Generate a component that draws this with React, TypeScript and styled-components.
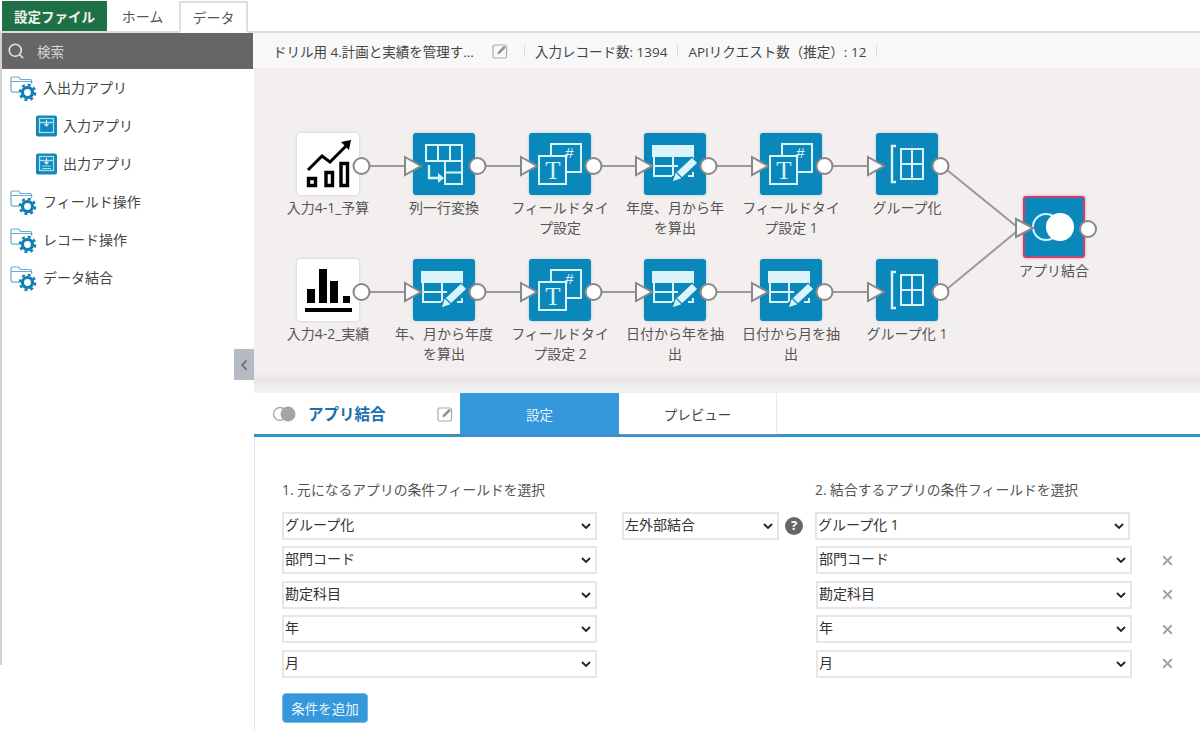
import React from "react";
import styled, { createGlobalStyle } from "styled-components";
import { ChevronLeft, Search, X } from "lucide-react";

const Global = createGlobalStyle`
  html, body { margin: 0; padding: 0; background: #fff; }
  * { box-sizing: border-box; }
  body { font-family: "Open Sans", "Noto Sans CJK JP", sans-serif; color: #444; }
`;

const Page = styled.div`
  width: 1200px; height: 731px; overflow: hidden; display: flex; flex-direction: column; background: #fff;
`;
const TabBar = styled.div`
  height: 33px; display: flex; padding-left: 2px; padding-top: 1px; border-bottom: 2px solid #dcdcdc; flex: none;
`;
const FileTab = styled.div`
  width: 105px; height: 30px; background: #1e7145; color: #f2f2f2; font-weight: 700; font-size: 13.5px;
  display: flex; align-items: center; justify-content: center;
`;
const TopTab = styled.div<{ $active?: boolean }>`
  height: ${p => (p.$active ? "32px" : "30px")};
  width: ${p => (p.$active ? "69px" : "71px")};
  margin-left: ${p => (p.$active ? "1px" : "0")};
  display: flex; align-items: center; justify-content: center; font-size: 14px; color: #555; background: #fff;
  border: ${p => (p.$active ? "2px solid #dedede" : "none")};
  border-bottom: ${p => (p.$active ? "2px solid #fff" : "none")};
`;
const Body = styled.div`
  flex: 1; display: flex; min-height: 0;
`;
const Sidebar = styled.aside`
  position: relative; width: 254px; height: 632px; border-left: 2px solid #d2d2d2; flex: none;
`;
const SearchBar = styled.div`
  height: 36px; width: 251px; background: #666; color: #d4d4d4; display: flex; align-items: center;
  font-size: 13.5px; gap: 12px; padding-left: 5px;
`;
const Tree = styled.div`
  display: flex; flex-direction: column;
`;
const TreeRow = styled.div<{ $child?: boolean }>`
  height: 38px; display: flex; align-items: center; font-size: 14px; color: #444;
  padding-left: ${p => (p.$child ? "34px" : "8px")};
  gap: ${p => (p.$child ? "5px" : "6px")};
`;
const TreeText = styled.span`
  margin-top: -2px;
`;
const Collapse = styled.div`
  position: absolute; right: 0; top: 316px; width: 20px; height: 31px; background: #b4bbc2; color: #6f7780;
  display: flex; align-items: center; justify-content: center;
`;
const Main = styled.main`
  flex: 1; min-width: 0; display: flex; flex-direction: column;
`;
const InfoBar = styled.div`
  height: 36px; flex: none; background: #f8f8f8; display: flex; align-items: center; padding-left: 19px;
  font-size: 13.5px; color: #444; border-bottom: 1px solid #eaeaea; white-space: nowrap;
`;
const FlowTitle = styled.span`
  width: 219px;
`;
const Sep = styled.span<{ $wide?: boolean }>`
  width: 1px; height: 12px; background: #d8d8d8;
  margin: 0 10px 0 ${p => (p.$wide ? "15px" : "10px")};
`;
const Canvas = styled.section`
  position: relative; height: 311px; flex: none; background: #f4efef;
  box-shadow: inset 0 -7px 6px -5px rgba(90, 70, 70, .1);
`;
const Wires = styled.svg`
  position: absolute; inset: 0; width: 100%; height: 100%; z-index: 2;
`;
const FlowNode = styled.div<{ $x: number; $y: number }>`
  position: absolute; left: ${p => p.$x - 19}px; top: ${p => p.$y}px; width: 100px;
  display: flex; flex-direction: column; align-items: center;
`;
const NodeBox = styled.div<{ $white?: boolean; $selected?: boolean }>`
  width: 62px; height: 62px; border-radius: 3px; margin-bottom: 3px;
  background: ${p => (p.$white ? "#fff" : "#0b88bb")};
  border: ${p => (p.$selected ? "2px solid #c8436c" : "none")};
  box-shadow: 0 0 3px ${p => (p.$selected ? "rgba(210,68,111,.6)" : "rgba(60,130,170,.35)")};
  display: flex; align-items: center; justify-content: center;
`;
const NodeLabel = styled.div`
  width: 100px; font-size: 14px; line-height: 20px; text-align: center; color: #555;
`;
const Strip = styled.div`
  height: 13px; flex: none; background: linear-gradient(#e8e4e4, #eeeeee 50%, #f1f1f1);
`;
const PanelHead = styled.div`
  height: 44px; flex: none; display: flex; border-bottom: 3px solid #3a8fc8; padding-left: 18px; background: #fff;
`;
const PanelTitle = styled.div`
  width: 188px; display: flex; align-items: center; gap: 10px; font-size: 15.5px; font-weight: 700; color: #1a6fae;
`;
const TitleText = styled.span`
  width: 119px;
`;
const PanelTab = styled.div<{ $active?: boolean }>`
  height: 41px; display: flex; align-items: center; justify-content: center; font-size: 13.5px;
  width: ${p => (p.$active ? "159px" : "157px")};
  background: ${p => (p.$active ? "#3498db" : "#fff")};
  color: ${p => (p.$active ? "#e6f3fb" : "#444")};
  box-shadow: ${p => (p.$active ? "none" : "1px 0 1px #e8e8e8")};
`;
const Form = styled.section`
  flex: 1; border-left: 1px solid #e6e6e6; padding: 40px 0 0 27px; position: relative;
`;
const Grid = styled.div`
  display: grid; grid-template-columns: 340px 193px 351px 20px; align-items: start;
`;
const Column = styled.div`
  display: flex; flex-direction: column;
`;
const ColLabel = styled.div`
  height: 34.5px; font-size: 13.8px; color: #555; line-height: 26px; white-space: nowrap;
`;
const chevron = encodeURIComponent(
  '<svg xmlns="http://www.w3.org/2000/svg" width="10" height="6" viewBox="0 0 10 6"><path d="M1 1l4 4 4-4" fill="none" stroke="#222" stroke-width="1.800"/></svg>'
);
const Field = styled.select<{ $w?: number; $shift?: number }>`
  appearance: none;
  width: ${p => p.$w ?? 315}px; height: 28px; margin: 0 0 6.5px ${p => p.$shift ?? 0}px;
  border: 2px solid #e6e6e6; border-radius: 0; color: #333;
  background: #fff url("data:image/svg+xml,${chevron}") no-repeat right 4px center;
  font-family: "Open Sans", "Noto Sans CJK JP", sans-serif; font-size: 14px; padding: 0 16px 3px 1px; outline: none;
`;
const MiddleRow = styled.div`
  display: flex; align-items: flex-start; margin-top: 34.5px; gap: 6px;
`;
const Help = styled.div`
  width: 18px; height: 18px; margin-top: 5px; border-radius: 50%; background: #666; color: #fff; font-weight: 700; font-size: 13px;
  display: flex; align-items: center; justify-content: center; line-height: 1;
`;
const RemoveList = styled.div`
  display: flex; flex-direction: column; padding-top: 69px; margin-left: -9px;
`;
const Remove = styled.div`
  height: 28px; margin-bottom: 6.5px; color: #a3a3a3; display: flex; align-items: center; justify-content: center; width: 20px;
`;
const AddButton = styled.button`
  display: block; width: 86px; height: 30px; margin-top: 8.5px; background: #3498db; border: 1px solid #76b9e6; border-radius: 4px; color: #eaf5fc;
  font-family: "Open Sans", "Noto Sans CJK JP", sans-serif; font-size: 13.5px; padding: 0;
`;

const Edit = () => (
  <svg width="17" height="16" viewBox="0 0 17 16" fill="none">
    <rect x="1" y="2" width="13.500" height="13" rx="1.500" stroke="#aaa" strokeWidth="1.200" />
    <path d="M5 11.500l.6-2.600L12 2.400l2.200 2.200-6.400 6.400z" fill="#8f8f8f" stroke="#fff" strokeWidth=".6" />
  </svg>
);

const FolderGear = () => (
  <svg width="27" height="27" viewBox="0 0 27 27" fill="none">
    <path d="M1 15V3.500C1 2.500 1.600 2 2.500 2h6l2 2.500H20c1 0 1.600.6 1.600 1.500v3M1 6.500h20M1 15c0 1.500.8 2.200 2 2.200h6" stroke="#66add0" strokeWidth="1.200" />
    <circle cx="17.500" cy="17.500" r="5" stroke="#0e7fb2" strokeWidth="3.200" />
    <circle cx="17.500" cy="17.500" r="7.600" stroke="#0e7fb2" strokeWidth="2.400" strokeDasharray="3 2.970" />
  </svg>
);

const AppIcon = ({ output }: { output?: boolean }) => (
  <svg width="22" height="22" viewBox="0 0 22 22" fill="none">
    <rect width="21" height="21" y="0.500" rx="2" fill="#1486b8" />
    <rect x="3.500" y="3.500" width="14" height="14" fill="#1486b8" stroke="#9fe0f2" strokeWidth="1.300" />
    <path d="M3.500 7.500h14" stroke="#9fe0f2" strokeWidth="1.500" />
    <path d="M10.500 5v5M8.500 9l2 2 2-2" stroke="#d8f4fb" strokeWidth="1.100" />
    {output && <path d="M6 13h9M6 15.500h9" stroke="#9fe0f2" strokeWidth="1" />}
  </svg>
);

const stroke = "#d9f4fb";

const RiseIcon = () => (
  <svg width="62" height="62" viewBox="0 0 62 62" fill="none">
    <path d="M11 37l14-14 8 6 16-16" stroke="#000" strokeWidth="3" />
    <path d="M44 9l10-2-2 10z" fill="#000" />
    <path d="M11.500 45.500h7v7h-7zM29 39.500h6.500v13H29zM44 30.500h6.500v22H44z" stroke="#000" strokeWidth="3.400" />
  </svg>
);
const BarsIcon = () => (
  <svg width="62" height="62" viewBox="0 0 62 62" fill="#000">
    <rect x="10" y="30" width="8" height="14" />
    <rect x="22" y="10" width="8" height="34" />
    <rect x="33" y="22" width="8" height="22" />
    <rect x="46" y="37" width="7" height="7" />
    <rect x="8" y="49" width="47" height="4" />
  </svg>
);
const PivotIcon = () => (
  <svg width="62" height="62" viewBox="0 0 62 62" fill="none" stroke={stroke} strokeWidth="2">
    <path d="M13 12h36v16H13zM25 12v16M37 12v16M32 28h17v23H32zM32 39.500h17" />
    <path d="M16 32v13h11" strokeWidth="2.400" />
    <path d="M25 40l6 5-6 5z" fill={stroke} stroke="none" />
  </svg>
);
const GlyphT = styled.text`
  font-family: "Liberation Serif", serif; font-weight: 400; font-size: 25px; fill: #d9f4fb; text-anchor: middle;
`;
const GlyphHash = styled.text`
  font-family: "Liberation Sans", sans-serif; font-size: 15px; fill: #d9f4fb; font-style: italic;
`;
const TypeIcon = () => (
  <svg width="62" height="62" viewBox="0 0 62 62" fill="none" stroke={stroke} strokeWidth="2">
    <rect x="22" y="11" width="30" height="28" />
    <GlyphHash x="36" y="25" stroke="none">#</GlyphHash>
    <rect x="10" y="23" width="27" height="28" fill="#0b88bb" />
    <GlyphT x="24" y="46" stroke="none">T</GlyphT>
  </svg>
);
const CalcIcon = () => (
  <svg width="62" height="62" viewBox="0 0 62 62" fill="none" stroke={stroke} strokeWidth="2">
    <rect x="9" y="13" width="40" height="10" fill={stroke} />
    <path d="M10 23v20h18M49 23v6M10 33h24M29 23v20M44 43h5v-4" />
    <path d="M28 49l3-9 17-16 6 6-17 16z" fill={stroke} stroke="#0b88bb" strokeWidth="1.200" />
    <path d="M32.500 39.500l6 6" stroke="#0b88bb" strokeWidth="1.200" />
  </svg>
);
const GroupIcon = () => (
  <svg width="62" height="62" viewBox="0 0 62 62" fill="none" stroke={stroke} strokeWidth="2">
    <path d="M20 13h-4v36h4" strokeWidth="2.400" />
    <path d="M25 16h22v30H25zM36 16v30M25 31h22" />
  </svg>
);
const JoinIcon = () => (
  <svg width="58" height="58" viewBox="2 2 58 58" fill="none">
    <circle cx="23" cy="31" r="13" stroke={stroke} strokeWidth="2" />
    <circle cx="37" cy="31" r="14" fill="#fff" />
  </svg>
);
const SmallJoin = () => (
  <svg width="26" height="18" viewBox="0 0 26 18" fill="none">
    <circle cx="8" cy="9" r="6.500" stroke="#aaa" strokeWidth="1.400" />
    <circle cx="16" cy="9" r="7.500" fill="#a5a5a5" />
  </svg>
);

type N = { x: number; y: number; label: string; icon: React.ReactNode; white?: boolean; selected?: boolean };
const xs = [43, 159, 275, 390, 506, 622];
const row1 = 64, row2 = 190;
const nodes: N[] = [
  { x: xs[0], y: row1, label: "入力4-1_予算", icon: <RiseIcon />, white: true },
  { x: xs[1], y: row1, label: "列一行変換", icon: <PivotIcon /> },
  { x: xs[2], y: row1, label: "フィールドタイプ設定", icon: <TypeIcon /> },
  { x: xs[3], y: row1, label: "年度、月から年を算出", icon: <CalcIcon /> },
  { x: xs[4], y: row1, label: "フィールドタイプ設定 1", icon: <TypeIcon /> },
  { x: xs[5], y: row1, label: "グループ化", icon: <GroupIcon /> },
  { x: xs[0], y: row2, label: "入力4-2_実績", icon: <BarsIcon />, white: true },
  { x: xs[1], y: row2, label: "年、月から年度を算出", icon: <CalcIcon /> },
  { x: xs[2], y: row2, label: "フィールドタイプ設定 2", icon: <TypeIcon /> },
  { x: xs[3], y: row2, label: "日付から年を抽出", icon: <CalcIcon /> },
  { x: xs[4], y: row2, label: "日付から月を抽出", icon: <CalcIcon /> },
  { x: xs[5], y: row2, label: "グループ化 1", icon: <GroupIcon /> },
  { x: 769, y: 127, label: "アプリ結合", icon: <JoinIcon />, selected: true },
];

const wireColor = "#999";
const portColor = "#888";
const Ports = () => (
  <Wires viewBox="0 0 946 311" fill="none">
    {[row1, row2].map(y =>
      xs.slice(0, 5).map((x, i) => (
        <line key={`${y}${i}`} x1={x + 64} y1={y + 33} x2={xs[i + 1] - 8} y2={y + 33} stroke={wireColor} strokeWidth="2" />
      ))
    )}
    <line x1={693} y1={101} x2={762} y2={157} stroke={wireColor} strokeWidth="2" />
    <line x1={693} y1={220} x2={762} y2={163} stroke={wireColor} strokeWidth="2" />
    {[row1, row2].map(y =>
      xs.map((x, i) => (
        <g key={`${y}p${i}`}>
          {i > 0 && <polygon points={`${x - 8},${y + 24} ${x + 8},${y + 33} ${x - 8},${y + 42}`} fill="#f8f8f8" stroke={portColor} strokeWidth="2" />}
          <circle cx={x + 64.500} cy={y + 33} r="8" fill="#fff" stroke={portColor} strokeWidth="2" />
        </g>
      ))
    )}
    <polygon points="762,150 779,159 762,168" fill="#f8f8f8" stroke={portColor} strokeWidth="2" />
    <circle cx="834" cy="160" r="8" fill="#fff" stroke={portColor} strokeWidth="2" />
  </Wires>
);

const leftFields = ["部門コード", "勘定科目", "年", "月"];
const Select = ({ v, w, shift }: { v: string; w?: number; shift?: number }) => (
  <Field $w={w} $shift={shift} defaultValue={v}><option>{v}</option></Field>
);

export default function App() {
  return (
    <Page>
      <Global />
      <TabBar>
        <FileTab>設定ファイル</FileTab>
        <TopTab>ホーム</TopTab>
        <TopTab $active>データ</TopTab>
      </TabBar>
      <Body>
        <Sidebar>
          <SearchBar><Search size={18} strokeWidth={2.200} color="#e2e2e2" />検索</SearchBar>
          <Tree>
            <TreeRow><FolderGear /><TreeText>入出力アプリ</TreeText></TreeRow>
            <TreeRow $child><AppIcon /><TreeText>入力アプリ</TreeText></TreeRow>
            <TreeRow $child><AppIcon output /><TreeText>出力アプリ</TreeText></TreeRow>
            <TreeRow><FolderGear /><TreeText>フィールド操作</TreeText></TreeRow>
            <TreeRow><FolderGear /><TreeText>レコード操作</TreeText></TreeRow>
            <TreeRow><FolderGear /><TreeText>データ結合</TreeText></TreeRow>
          </Tree>
          <Collapse><ChevronLeft size={16} strokeWidth={3} /></Collapse>
        </Sidebar>
        <Main>
          <InfoBar>
            <FlowTitle>ドリル用 4.計画と実績を管理す...</FlowTitle>
            <Edit />
            <Sep $wide />
            入力レコード数: 1394
            <Sep />
            APIリクエスト数（推定）: 12
            <Sep />
          </InfoBar>
          <Canvas>
            {nodes.map(n => (
              <FlowNode key={n.label} $x={n.x} $y={n.y}>
                <NodeBox $white={n.white} $selected={n.selected}>{n.icon}</NodeBox>
                <NodeLabel>{n.label}</NodeLabel>
              </FlowNode>
            ))}
            <Ports />
          </Canvas>
          <Strip />
          <PanelHead>
            <PanelTitle>
              <SmallJoin />
              <TitleText>アプリ結合</TitleText>
              <Edit />
            </PanelTitle>
            <PanelTab $active>設定</PanelTab>
            <PanelTab>プレビュー</PanelTab>
          </PanelHead>
          <Form>
            <Grid>
              <Column>
                <ColLabel>1. 元になるアプリの条件フィールドを選択</ColLabel>
                <Select v="グループ化" />
                {leftFields.map(f => <Select key={f} v={f} />)}
                <AddButton>条件を追加</AddButton>
              </Column>
              <MiddleRow>
                <Select v="左外部結合" w={157} />
                <Help>?</Help>
              </MiddleRow>
              <Column>
                <ColLabel>2. 結合するアプリの条件フィールドを選択</ColLabel>
                <Select v="グループ化 1" />
                {leftFields.map(f => <Select key={f} v={f} w={316} shift={1} />)}
              </Column>
              <RemoveList>
                {leftFields.map(f => <Remove key={f}><X size={15} strokeWidth={3} /></Remove>)}
              </RemoveList>
            </Grid>
          </Form>
        </Main>
      </Body>
    </Page>
  );
}
